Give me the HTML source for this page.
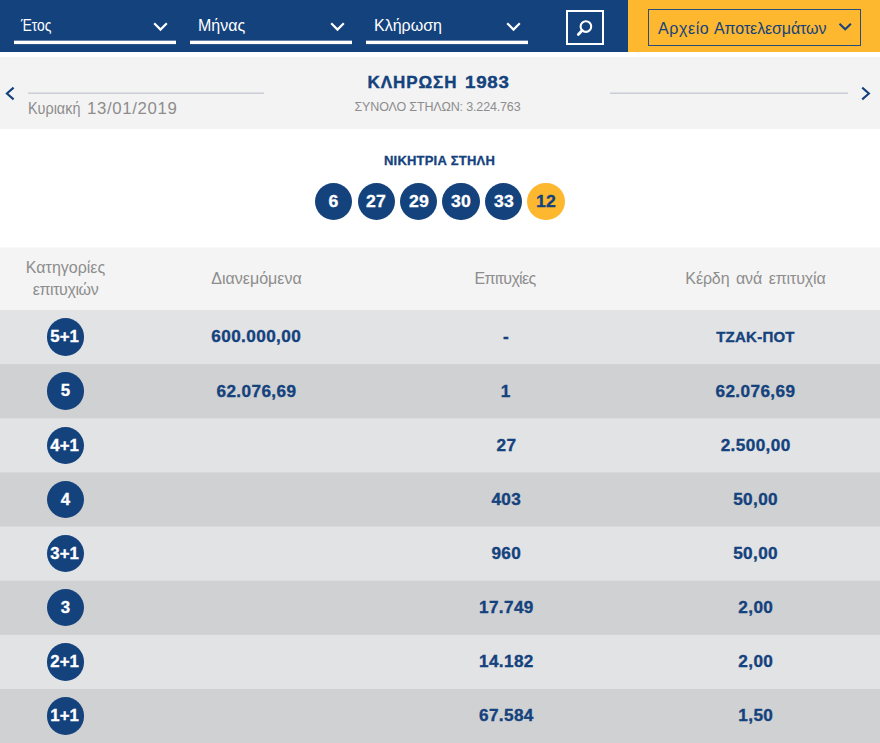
<!DOCTYPE html>
<html lang="el">
<head>
<meta charset="utf-8">
<title>Αποτελέσματα Κλήρωσης 1983</title>
<style>
  html, body { margin: 0; padding: 0; }
  body {
    width: 880px; height: 743px; overflow: hidden; position: relative;
    background: #ffffff;
    font-family: "Liberation Sans", sans-serif;
    color: #14427d;
  }
  .abs { position: absolute; white-space: nowrap; }
  .t { position: absolute; white-space: nowrap; line-height: 1; display: inline-block; transform-origin: 0 50%; }
  .c { position: absolute; white-space: nowrap; line-height: 1; transform-origin: 50% 50%; text-align: center; }

  /* ---------- top bar ---------- */
  #bar { position: absolute; left: 0; top: 0; width: 628px; height: 52px; background: #14427d; }
  #arch { position: absolute; left: 628px; top: 0; width: 252px; height: 52px; background: #fdb830; }
  .sel { position: absolute; top: 0; height: 44px; border-bottom: 0; }
  .sel .ul { position: absolute; left: 0; right: 0; top: 40px; height: 5px; background: linear-gradient(to bottom, #6684aa 0, #6684aa 1px, #ffffff 1px, #ffffff 4px, #2d5388 4px, #2d5388 5px); }
  .sel .lbl { position: absolute; left: 6px; top: 16px; font-size: 16px; line-height: 20px; color: #ffffff; white-space: nowrap; transform-origin: 0 50%; }
  .sel svg { position: absolute; top: 22px; width: 15px; height: 10px; }
  #sbox { position: absolute; left: 566px; top: 10px; width: 34px; height: 31px; border: 2px solid #ffffff; }
  #sbox svg { position: absolute; left: 8px; top: 6px; width: 20px; height: 20px; }
  #abox { position: absolute; left: 648px; top: 9px; width: 211px; height: 35px; border: 1px solid #274e7c; }
  #abox .lbl { position: absolute; left: 9px; top: 8px; font-size: 16px; letter-spacing: 0.22px; line-height: 22px; color: #14427d; white-space: nowrap; transform-origin: 0 50%; }
  #abox svg { position: absolute; left: 189px; top: 13px; width: 15px; height: 10px; }

  /* ---------- draw header ---------- */
  #head { position: absolute; left: 0; top: 57px; width: 880px; height: 72px; background: #f3f3f3; }
  .hl { position: absolute; top: 35px; height: 2px; background: linear-gradient(to bottom, #dddfe4 0, #dddfe4 1px, #cbced5 1px, #cbced5 2px); }
  #head svg { position: absolute; top: 29px; width: 12px; height: 15px; }
  #date, #date2 { top: 42px; font-size: 16px; line-height: 20px; color: #8d8d8d; }
  #date { left: 28px; transform: scaleX(0.9); }
  #date2 { left: 86.5px; letter-spacing: 0.6px; transform: scaleX(1.05); }
  #title, #title2 { top: 15px; font-size: 17px; line-height: 22px; font-weight: bold; color: #14427d; -webkit-text-stroke: 0.4px #14427d; }
  #title { left: 367.5px; letter-spacing: 0.95px; }
  #title2 { left: 465.3px; letter-spacing: 0.7px; transform: scaleX(1.1); }
  #sub { left: 264px; width: 347px; top: 42px; font-size: 12.5px; letter-spacing: -0.15px; line-height: 16px; color: #8d8d8d; }

  /* ---------- winning column ---------- */
  #win { left: 0; width: 879px; top: 152.5px; font-size: 13px; letter-spacing: 0.2px; -webkit-text-stroke: 0.3px #14427d; line-height: 16px; font-weight: bold; color: #14427d; }
  #balls { position: absolute; left: 315.1px; top: 183px; height: 37.4px; display: flex; }
  .ball { width: 37.4px; height: 37.4px; border-radius: 50%; background: #14427d; color: #ffffff; margin-right: 5.04px;
          font-weight: bold; font-size: 16px; line-height: 37.4px; text-align: center; -webkit-text-stroke: 0.3px currentColor; }
  .ball.j { background: #fdb830; color: #14427d; margin-right: 0; }
  .ball span { display: inline-block; transform: scaleX(1.1); }

  /* ---------- table ---------- */
  #tbl { position: absolute; left: 0; top: 240px; width: 880px; height: 503px; background: linear-gradient(to bottom, #ffffff 0, #ffffff 7px, #f4f4f4 8px, #f4f4f4 69.50px, #e2e3e5 70.50px, #e2e3e5 123.64px, #d0d1d3 124.64px, #d0d1d3 177.78px, #e2e3e5 178.78px, #e2e3e5 231.92px, #d0d1d3 232.92px, #d0d1d3 286.06px, #e2e3e5 287.06px, #e2e3e5 340.20px, #d0d1d3 341.20px, #d0d1d3 394.34px, #e2e3e5 395.34px, #e2e3e5 448.48px, #d0d1d3 449.48px, #d0d1d3 503px); }
  #th { position: absolute; left: 0; top: 247.5px; width: 880px; height: 62.5px; }
  .row { position: absolute; left: 0; width: 880px; height: 54.14px; }
  .cell { position: absolute; top: 0; height: 100%; display: flex; align-items: center; justify-content: center; text-align: center; }
  .c1 { left: 0; width: 131px; }
  .c2 { left: 131.5px; width: 250px; }
  .c3 { left: 381px; width: 250px; }
  .c4 { left: 630px; width: 251px; }
  #th .cell { font-size: 16px; line-height: 22px; color: #8d8d8d; }
  .row .cell { font-size: 16.5px; line-height: 20px; font-weight: bold; color: #14427d; -webkit-text-stroke: 0.35px #14427d; }
  .row .cell > span { letter-spacing: 0.38px; position: relative; left: 0.2px; top: -1px; transform: scaleX(1.04); }
    .row.dn .cell > span { top: 0; }
  .row .cell > span.cap { letter-spacing: 0.24px; font-size: 15px; left: 0; top: 0; transform: none; }
  .cat { width: 37.4px; height: 37.4px; border-radius: 50%; background: #14427d; color: #ffffff;
         font-weight: bold; font-size: 16px; line-height: 37.4px; text-align: center; -webkit-text-stroke: 0.3px currentColor; }
  .cat span { display: inline-block; transform: scaleX(1.05); letter-spacing: 0; }
  .cat span.p { position: relative; left: -1px; }
  .cell span { display: inline-block; white-space: nowrap; }
</style>
</head>
<body>

<!-- top filter bar -->
<div id="bar">
  <div class="sel" style="left:14px;width:162px;">
    <span class="lbl" style="left:7px;transform:scaleX(0.865)">Έτος</span>
    <svg style="left:139.4px" viewBox="0 0 15 10"><path d="M1.2 1.2 L7.5 7.6 L13.8 1.2" fill="none" stroke="#ffffff" stroke-width="2.2"/></svg>
    <div class="ul"></div>
  </div>
  <div class="sel" style="left:190px;width:162px;">
    <span class="lbl" style="left:8px">Μήνας</span>
    <svg style="left:140px" viewBox="0 0 15 10"><path d="M1.2 1.2 L7.5 7.6 L13.8 1.2" fill="none" stroke="#ffffff" stroke-width="2.2"/></svg>
    <div class="ul"></div>
  </div>
  <div class="sel" style="left:366px;width:162px;">
    <span class="lbl" style="left:8px">Κλήρωση</span>
    <svg style="left:140px" viewBox="0 0 15 10"><path d="M1.2 1.2 L7.5 7.6 L13.8 1.2" fill="none" stroke="#ffffff" stroke-width="2.2"/></svg>
    <div class="ul"></div>
  </div>
  <div id="sbox">
    <svg viewBox="0 0 20 20"><circle cx="9.9" cy="8.6" r="5.3" fill="none" stroke="#ffffff" stroke-width="2.1"/><path d="M6.1 12.6 L2.3 16.4" stroke="#ffffff" stroke-width="2.8" stroke-linecap="round"/></svg>
  </div>
</div>
<div id="arch">
</div>
<div id="abox">
  <span class="lbl"><span style="letter-spacing:0.6px">Αρχείο</span> <span style="letter-spacing:-0.1px">Αποτελεσμάτων</span></span>
  <svg viewBox="0 0 15 10"><path d="M1.5 0.8 L7.2 6.3 L12.9 0.8" fill="none" stroke="#14427d" stroke-width="2"/></svg>
</div>

<!-- draw header -->
<div id="head">
  <svg style="left:4px" viewBox="0 0 12 15"><path d="M9.6 1.6 L2.9 7.5 L9.6 13.4" fill="none" stroke="#14427d" stroke-width="2.1"/></svg>
  <div class="hl" style="left:28px;width:236px;"></div>
  <span id="date" class="t">Κυριακή</span><span id="date2" class="t">13/01/2019</span>
  <span id="title" class="t">ΚΛΗΡΩΣΗ</span><span id="title2" class="t">1983</span>
  <div id="sub" class="c">ΣΥΝΟΛΟ ΣΤΗΛΩΝ: 3.224.763</div>
  <div class="hl" style="left:610px;width:238px;"></div>
  <svg style="left:860px" viewBox="0 0 12 15"><path d="M2.2 1.6 L8.9 7.5 L2.2 13.4" fill="none" stroke="#14427d" stroke-width="2.1"/></svg>
</div>

<!-- winning column -->
<div id="win" class="c">ΝΙΚΗΤΡΙΑ ΣΤΗΛΗ</div>
<div id="balls">
  <div class="ball"><span>6</span></div><div class="ball"><span>27</span></div><div class="ball"><span>29</span></div><div class="ball"><span>30</span></div><div class="ball"><span>33</span></div><div class="ball j"><span>12</span></div>
</div>

<!-- table -->
<div id="tbl"></div>
<div id="th">
  <div class="cell c1"><span>Κατηγορίες<br><span style="letter-spacing:-0.4px">επιτυχιών</span></span></div>
  <div class="cell c2"><span>Διανεμόμενα</span></div>
  <div class="cell c3"><span style="letter-spacing:-0.7px;position:relative;left:-1px">Επιτυχίες</span></div>
  <div class="cell c4"><span style="word-spacing:2.2px;letter-spacing:-0.12px">Κέρδη ανά επιτυχία</span></div>
</div>

<div class="row odd" style="top:310.00px">
  <div class="cell c1"><div class="cat"><span class="p">5+1</span></div></div>
  <div class="cell c2"><span>600.000,00</span></div>
  <div class="cell c3"><span>-</span></div>
  <div class="cell c4"><span class="cap">ΤΖΑΚ-ΠΟΤ</span></div>
</div>
<div class="row even dn" style="top:364.14px">
  <div class="cell c1"><div class="cat"><span>5</span></div></div>
  <div class="cell c2"><span>62.076,69</span></div>
  <div class="cell c3"><span>1</span></div>
  <div class="cell c4"><span>62.076,69</span></div>
</div>
<div class="row odd dn" style="top:418.28px">
  <div class="cell c1"><div class="cat"><span class="p">4+1</span></div></div>
  <div class="cell c2"><span></span></div>
  <div class="cell c3"><span>27</span></div>
  <div class="cell c4"><span>2.500,00</span></div>
</div>
<div class="row even dn" style="top:472.42px">
  <div class="cell c1"><div class="cat"><span>4</span></div></div>
  <div class="cell c2"><span></span></div>
  <div class="cell c3"><span>403</span></div>
  <div class="cell c4"><span>50,00</span></div>
</div>
<div class="row odd" style="top:526.56px">
  <div class="cell c1"><div class="cat"><span class="p">3+1</span></div></div>
  <div class="cell c2"><span></span></div>
  <div class="cell c3"><span>960</span></div>
  <div class="cell c4"><span>50,00</span></div>
</div>
<div class="row even" style="top:580.70px">
  <div class="cell c1"><div class="cat"><span>3</span></div></div>
  <div class="cell c2"><span></span></div>
  <div class="cell c3"><span>17.749</span></div>
  <div class="cell c4"><span>2,00</span></div>
</div>
<div class="row odd" style="top:634.84px">
  <div class="cell c1"><div class="cat"><span class="p">2+1</span></div></div>
  <div class="cell c2"><span></span></div>
  <div class="cell c3"><span>14.182</span></div>
  <div class="cell c4"><span>2,00</span></div>
</div>
<div class="row even" style="top:688.98px">
  <div class="cell c1"><div class="cat"><span class="p">1+1</span></div></div>
  <div class="cell c2"><span></span></div>
  <div class="cell c3"><span>67.584</span></div>
  <div class="cell c4"><span>1,50</span></div>
</div>

</body>
</html>
